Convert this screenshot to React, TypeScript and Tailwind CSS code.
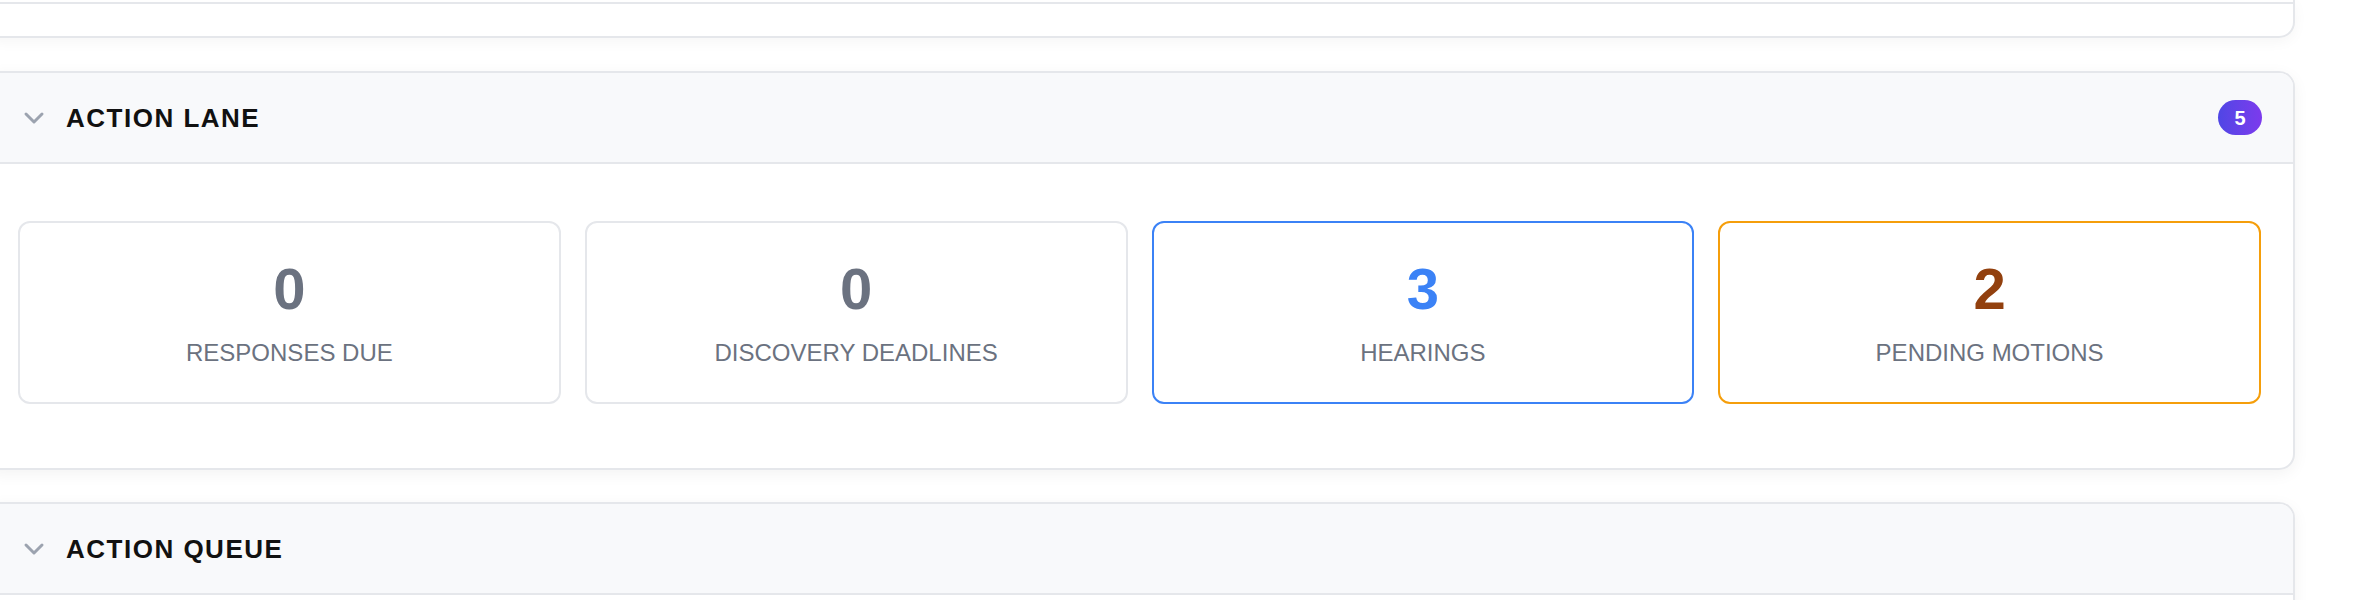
import React from "react";

function Chevron() {
  return (
    <svg width="24" height="24" viewBox="0 0 24 24" fill="none" className="shrink-0">
      <path d="M4 8 L12 16 L20 8" stroke="#9ca3af" strokeWidth="3" strokeLinecap="round" strokeLinejoin="round" />
    </svg>
  );
}

type Stat = { value: string; label: string; border: string; color: string };

const stats: Stat[] = [
  { value: "0", label: "RESPONSES DUE", border: "border-[#e5e7eb]", color: "text-[#6b7280]" },
  { value: "0", label: "DISCOVERY DEADLINES", border: "border-[#e5e7eb]", color: "text-[#6b7280]" },
  { value: "3", label: "HEARINGS", border: "border-[#3b82f6]", color: "text-[#3b82f6]" },
  { value: "2", label: "PENDING MOTIONS", border: "border-[#f59e0b]", color: "text-[#92400e]" },
];

function Header({ title, badge }: { title: string; badge?: string }) {
  return (
    <div className="h-[91px] bg-[#f8f9fb] border-b-2 border-[#e5e7eb] flex items-center pl-[36px] pr-[31px]">
      <Chevron />
      <div className="ml-[20px] text-[26px] font-bold tracking-[1.5px] text-[#111111] leading-none">{title}</div>
      <div className="flex-1" />
      {badge && (
        <div className="w-[44px] h-[35px] rounded-full bg-linear-to-r from-[#4f46e5] to-[#7c3aed] flex items-center justify-center text-white font-bold text-[20px] leading-none">
          {badge}
        </div>
      )}
    </div>
  );
}

export default function App() {
  return (
    <div className="w-[2360px] h-[600px] overflow-hidden bg-white font-['Liberation_Sans',Arial,sans-serif]">
      <div className="ml-[-16px] w-[2311px] flex flex-col">
        <div className="h-[38px] bg-white border-2 border-t-0 border-[#e5e7eb] rounded-b-[16px] shadow-[0_4px_14px_rgba(0,0,0,0.04)]">
          <div className="h-[4px] border-b-2 border-[#e5e7eb]" />
        </div>

        <div className="mt-[33px] bg-white border-2 border-[#e5e7eb] rounded-[16px] overflow-hidden shadow-[0_4px_16px_rgba(0,0,0,0.05)]">
          <Header title="ACTION LANE" badge="5" />
          <div className="pt-[57px] pb-[64px] px-[32px] grid grid-cols-4 gap-[24px]">
            {stats.map((s) => (
              <div
                key={s.label}
                className={`h-[183px] border-2 ${s.border} rounded-[12px] bg-white flex flex-col items-center pt-[37px]`}
              >
                <div className={`text-[58px] leading-none font-bold ${s.color}`}>{s.value}</div>
                <div className="mt-[19px] text-[24px] leading-[32px] text-[#6b7280]">{s.label}</div>
              </div>
            ))}
          </div>
        </div>

        <div className="mt-[32px] h-[200px] bg-white border-2 border-[#e5e7eb] rounded-[16px] overflow-hidden shadow-[0_4px_16px_rgba(0,0,0,0.05)]">
          <Header title="ACTION QUEUE" />
        </div>
      </div>
    </div>
  );
}
